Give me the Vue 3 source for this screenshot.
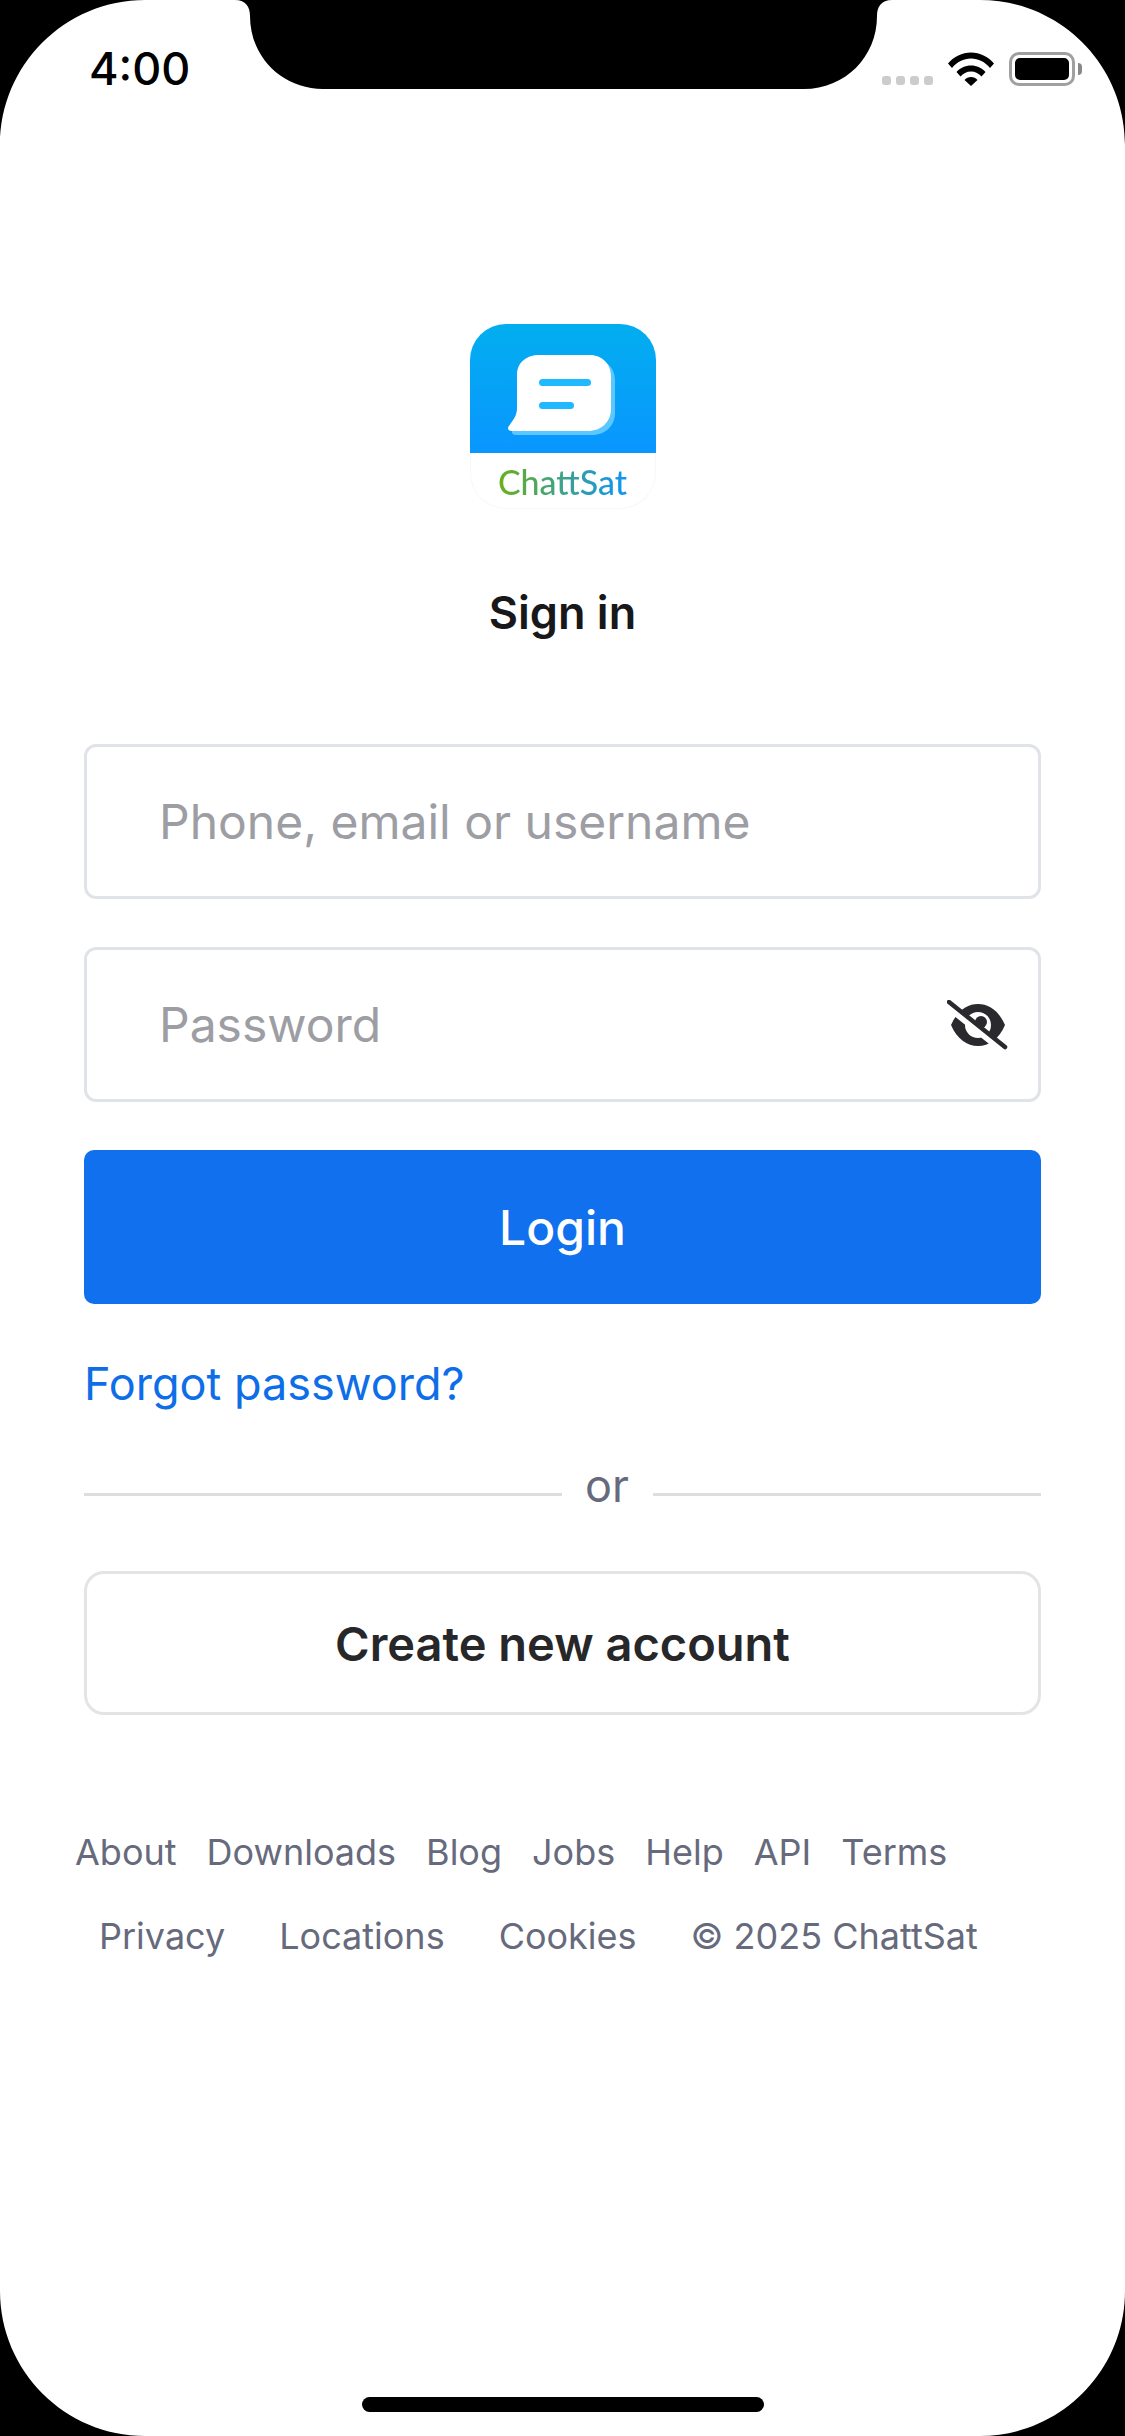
<script setup>
const row1 = ['About', 'Downloads', 'Blog', 'Jobs', 'Help', 'API', 'Terms']
const row2 = ['Privacy', 'Locations', 'Cookies', '© 2025 ChattSat']
</script>

<template>
  <div class="screen">
    <header class="status">
      <span class="time">4:00</span>
      <div class="status-right">
        <div class="dots"><i></i><i></i><i></i><i></i></div>
        <svg class="wifi" width="46" height="34" viewBox="0 0 46 34">
          <path d="M0 11.500C6 4.500 14 .5 23 .5s17 4 23 11l-4 4.500C37 10 30.500 6.500 23 6.500S9 10 4 16Z" fill="#000"/>
          <path d="M8.500 20C12 16 17.300 13.500 23 13.500S34 16 37.500 20l-4 4.500C31 21.500 27.300 19.500 23 19.500s-8 2-10.500 5Z" fill="#000"/>
          <path d="M16.500 28c1.500-1.800 4-3 6.500-3s5 1.200 6.500 3L23 34Z" fill="#000"/>
        </svg>
        <div class="battery"><div class="battery-fill"></div></div>
        <div class="battery-nub"></div>
      </div>
    </header>

    <main class="content">
      <div class="logo">
        <div class="logo-top">
          <svg width="186" height="129" viewBox="0 0 186 129">
            <path d="M47 51C47 38 57 31 69 31H120C132 31 141 40 141 52V85C141 98 131 107 118 107H42C38 107 37 104 39 102C43 96 47 92 47 84Z" transform="translate(4 4)" fill="#5cc8ff"/>
            <path d="M47 51C47 38 57 31 69 31H120C132 31 141 40 141 52V85C141 98 131 107 118 107H42C38 107 37 104 39 102C43 96 47 92 47 84Z" fill="#fff"/>
            <rect x="69" y="55" width="52" height="7" rx="3.500" fill="#1fb9ff"/>
            <rect x="69" y="78" width="35" height="7" rx="3.500" fill="#1fb9ff"/>
          </svg>
        </div>
        <div class="logo-bottom"><span class="logo-text">ChattSat</span></div>
      </div>

      <h1 class="title">Sign in</h1>

      <div class="field"><span class="placeholder">Phone, email or username</span></div>
      <div class="field field-pass">
        <span class="placeholder">Password</span>
        <svg class="eye" width="62" height="50" viewBox="0 0 62 50">
          <path d="M4 25C10 11 20 4 31 4s21 7 27 21c-6 14-16 21-27 21S10 39 4 25Z" fill="#2a2a2e"/>
          <circle cx="31" cy="25" r="13" fill="#fff"/>
          <circle cx="34" cy="22" r="6" fill="#2a2a2e"/>
          <path d="M-3 4 57 52" stroke="#fff" stroke-width="6"/>
          <path d="M2 2 58 47" stroke="#2a2a2e" stroke-width="4.500" stroke-linecap="round"/>
        </svg>
      </div>

      <button class="login">Login</button>
      <a class="forgot">Forgot password?</a>

      <div class="divider">
        <span class="line line-left"></span>
        <span class="or">or</span>
        <span class="line line-right"></span>
      </div>

      <button class="create">Create new account</button>

      <nav class="links links-1"><a v-for="l in row1" :key="l">{{ l }}</a></nav>
      <nav class="links links-2"><a v-for="l in row2" :key="l">{{ l }}</a></nav>
    </main>

    <div class="home-bar"></div>

    <svg class="frame" width="1125" height="2436" viewBox="0 0 1125 2436">
      <path fill="#000" fill-rule="evenodd" d="M0 0H1125V2436H0ZM0 145V2291C0 2371 65 2436 145 2436H980C1060 2436 1125 2371 1125 2291V145C1125 65 1060 0 980 0H892C881 0 877 7 877 16C877 57 845 89 804 89H323C282 89 250 57 250 16C250 7 246 0 235 0H145C65 0 0 65 0 145Z"/>
    </svg>
  </div>
</template>

<style>
html, body { margin: 0; background: #000; }
</style>

<style scoped>
.screen {
  position: relative;
  width: 1125px;
  height: 2436px;
  background: #fff;
  overflow: hidden;
  font-family: Inter, "Liberation Sans", sans-serif;
  display: flex;
  flex-direction: column;
}
.status {
  height: 136px;
  flex: none;
  display: flex;
  justify-content: space-between;
  align-items: flex-start;
  padding: 44px 43px 0 89px;
  box-sizing: border-box;
}
.time { font-size: 45px; line-height: 50px; font-weight: 500; color: #000; }
.status-right { display: flex; align-items: flex-start; padding-top: 8px; }
.dots { display: flex; gap: 5px; margin: 24px 15px 0 0; }
.dots i { width: 9px; height: 9px; border-radius: 3px; background: #ccc; display: block; }
.wifi { margin-right: 15px; }
.battery {
  width: 66px; height: 34px; box-sizing: border-box;
  border: 3px solid #a0a0a0; border-radius: 10px; padding: 3px;
}
.battery-fill { height: 100%; background: #000; border-radius: 5px; }
.battery-nub { width: 4px; height: 12px; margin: 11px 0 0 3px; background: #888; border-radius: 0 4px 4px 0; }

.content { flex: 1; display: flex; flex-direction: column; padding: 0 84px; align-items: stretch; }
.logo { width: 186px; height: 185px; margin: 188px auto 0; border-radius: 36px; overflow: hidden; box-shadow: inset 0 0 0 1px #f1f9ff; }
.logo-top { height: 129px; background: linear-gradient(#02aeef, #0a96ff); }
.logo-top svg { display: block; }
.logo-bottom { height: 56px; display: flex; justify-content: center; align-items: center; padding-top: 2px; box-sizing: border-box; }
.logo-text {
  font-family: Lato, sans-serif;
  font-size: 34px; line-height: 40px; font-weight: 500;
  background: linear-gradient(90deg, #6ab01c, #0e94f8);
  -webkit-background-clip: text; background-clip: text; color: transparent;
}
.title { margin: 74px 0 0; text-align: center; font-size: 45px; line-height: 60px; font-weight: 600; color: #18181b; }
.field {
  height: 155px; box-sizing: border-box;
  border: 3px solid #e0e4e8; border-radius: 12px; padding: 0 72px;
  display: flex; align-items: center; justify-content: space-between;
}
.title + .field { margin-top: 101px; }
.field-pass { margin-top: 48px; padding-right: 29px; }
.placeholder { font-size: 48px; color: #9d9da4; }
.login {
  height: 154px; margin-top: 48px; border: 0; border-radius: 10px;
  background: #1170ee; color: #fff; font: 500 48px Inter, sans-serif;
}
.forgot { margin-top: 50px; font-size: 45px; line-height: 60px; color: #0e6ee8; }
.divider { display: flex; align-items: flex-start; height: 60px; margin-top: 50px; }
.line { height: 3px; background: #dedede; margin-top: 29px; }
.line-left { width: 478px; }
.line-right { flex: 1; }
.or { margin: -8px 24px 0 23px; font-size: 45px; line-height: 60px; color: #666a7c; }
.create {
  height: 144px; margin-top: 47px; background: #fff;
  border: 3px solid #e4e4e4; border-radius: 20px;
  color: #27272a; font: 600 47px Inter, sans-serif;
}
.links { display: flex; font-size: 36px; line-height: 48px; color: #666a7c; }
.links-1 { gap: 30px; margin: 113px 0 0 -9px; white-space: nowrap; }
.links-2 { gap: 54px; margin: 36px 0 0 15px; white-space: nowrap; }
.home-bar { position: absolute; left: 362px; top: 2397px; width: 402px; height: 15px; border-radius: 8px; background: #000; }
.frame { position: absolute; inset: 0; pointer-events: none; }
</style>
